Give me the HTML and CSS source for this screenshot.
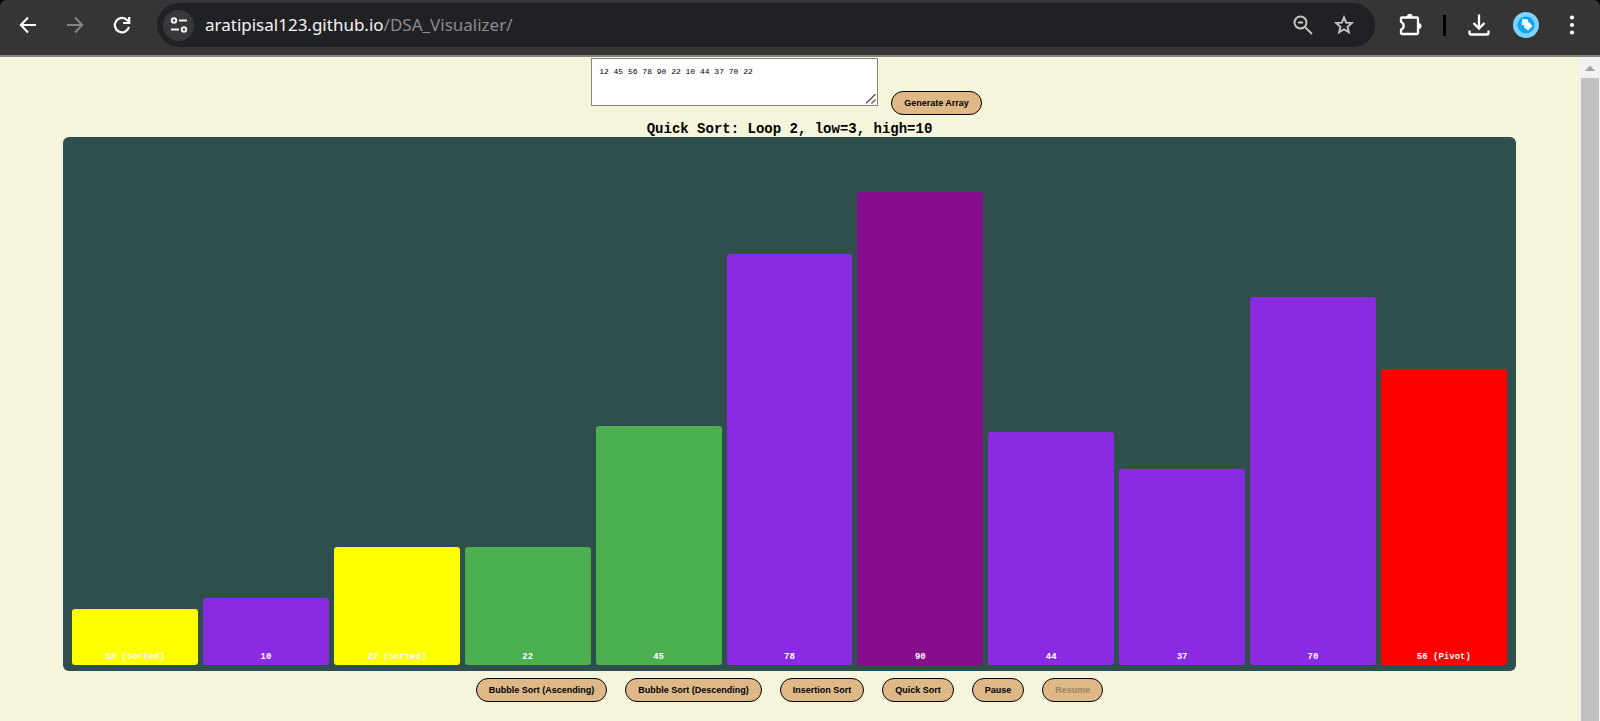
FILE: index.html
```html
<!DOCTYPE html>
<html lang="en">
<head>
<meta charset="utf-8">
<title>DSA Visualizer</title>
<link rel="stylesheet" href="styles.css">
</head>
<body>
<header class="toolbar">
  <nav class="nav">
    <button class="icon-btn" aria-label="Back"><svg width="24" height="24" viewBox="0 0 24 24" fill="none" stroke="#fff" stroke-width="2"><path d="M20 12H5M12 4.5L4.800 12L12 19.500"/></svg></button>
    <button class="icon-btn" aria-label="Forward"><svg width="24" height="24" viewBox="0 0 24 24" fill="none" stroke="#858585" stroke-width="2"><path d="M4 12H19M12 4.500L19.200 12L12 19.500"/></svg></button>
    <button class="icon-btn" aria-label="Reload"><svg width="24" height="24" viewBox="0 0 24 24" fill="none" stroke="#fff" stroke-width="2.200"><path d="M19 14A7.200 7.200 0 1 1 17.300 7.200L19 9"/><path d="M19.200 4V10H13"/></svg></button>
  </nav>
  <div class="omnibox">
    <button class="site-info" aria-label="Site information"><svg width="18" height="18" viewBox="0 0 18 18" fill="none" stroke="#f0f0f0" stroke-width="2"><circle cx="4" cy="4.500" r="2.200"/><path d="M9 4.500H17M1 13.500H9"/><circle cx="14" cy="13.500" r="2.200"/></svg></button>
    <a class="url" href="#">aratipisal123.github.io<span class="url-path">/DSA_Visualizer/</span></a>
    <button class="icon-btn" aria-label="Zoom"><svg width="24" height="24" viewBox="0 0 24 24" fill="none" stroke="#c7c7c7" stroke-width="1.900"><circle cx="9.500" cy="9.500" r="6"/><path d="M13.800 13.800L21 21M7 9.500H12"/></svg></button>
    <button class="icon-btn" aria-label="Bookmark"><svg width="24" height="24" viewBox="0 0 24 24" fill="none" stroke="#c7c7c7" stroke-width="1.900"><path d="M12 4.500L14.200 9.600L19.800 10.100L15.600 13.800L16.800 19.200L12 16.300L7.200 19.200L8.400 13.800L4.200 10.100L9.800 9.600Z"/></svg></button>
  </div>
  <div class="actions">
    <button class="icon-btn" aria-label="Extensions"><svg width="26" height="26" viewBox="0 0 26 26"><path d="M5 5.500H20Q21 5.500 21 6.500V21Q21 22 20 22H5Q4 22 4 21V17.500C7.500 16.500 7.500 11 4 10V6.500Q4 5.500 5 5.500Z" fill="none" stroke="#fff" stroke-width="2.300" stroke-linejoin="round"/><path d="M10 5A2.800 3.200 0 0 1 15.600 5ZM21.500 11A3 2.900 0 0 1 21.500 16.800Z" fill="#fff"/></svg></button>
    <span class="divider"></span>
    <button class="icon-btn" aria-label="Downloads"><svg width="26" height="26" viewBox="0 0 26 26" fill="none" stroke="#fff" stroke-width="2.300"><path d="M13 2.500V16M7.500 11L13 16.500L18.500 11M3.500 18.500V21Q3.500 22.500 5 22.500H21Q22.500 22.500 22.500 21V18.500"/></svg></button>
    <button class="icon-btn" aria-label="Profile"><svg width="26" height="26" viewBox="0 0 26 26"><circle cx="13" cy="13" r="13" fill="#7fd3fb"/><circle cx="13" cy="13" r="8.500" fill="#0aa5f5"/><path d="M9.500 7L15 7.500V10.500L16 10L19.500 14L15 18.500L11 15.500L11.500 13.500L8.500 12.500Z" fill="#fff"/></svg></button>
    <button class="icon-btn" aria-label="Menu"><svg width="24" height="24" viewBox="0 0 24 24" fill="#fff"><circle cx="12" cy="4.500" r="2.100"/><circle cx="12" cy="12" r="2.100"/><circle cx="12" cy="19.500" r="2.100"/></svg></button>
  </div>
</header>
<div class="viewport">
  <main class="page">
    <form class="input-row">
      <div class="array-field">
        <textarea class="array-input" aria-label="Array values">12 45 56 78 90 22 10 44 37 70 22</textarea>
        <svg class="grip" width="10" height="10" viewBox="0 0 10 10" stroke="#555" stroke-width="1.300"><path d="M0 9.500L9.500 0M5.500 9.500L9.500 5.500"/></svg>
      </div>
      <button class="btn" type="button">Generate Array</button>
    </form>
    <h1 class="status">Quick Sort: Loop 2, low=3, high=10</h1>
    <section class="chart" aria-label="Array bars">
      <div class="bar sorted" style="height:56px">10 (Sorted)</div>
      <div class="bar" style="height:67px">10</div>
      <div class="bar sorted" style="height:118px">22 (Sorted)</div>
      <div class="bar lower" style="height:118px">22</div>
      <div class="bar lower" style="height:239px">45</div>
      <div class="bar" style="height:411px">78</div>
      <div class="bar current" style="height:473px">90</div>
      <div class="bar" style="height:233px">44</div>
      <div class="bar" style="height:196px">37</div>
      <div class="bar" style="height:368px">70</div>
      <div class="bar pivot" style="height:296px">56 (Pivot)</div>
    </section>
    <div class="controls">
      <button class="btn">Bubble Sort (Ascending)</button>
      <button class="btn">Bubble Sort (Descending)</button>
      <button class="btn">Insertion Sort</button>
      <button class="btn">Quick Sort</button>
      <button class="btn">Pause</button>
      <button class="btn" disabled>Resume</button>
    </div>
  </main>
  <div class="scrollbar">
    <svg class="scroll-up" width="18" height="21" viewBox="0 0 18 21"><path d="M4 14L9 8.500L14 14Z" fill="#a3a3a3"/></svg>
    <div class="thumb"></div>
  </div>
</div>
</body>
</html>
```
FILE: styles.css
```css
* { box-sizing: border-box; }

html { background: #000; }

body {
  margin: 0;
  min-height: 100vh;
  display: flex;
  flex-direction: column;
  font-family: "Liberation Sans", Arial, sans-serif;
}

button { font-family: inherit; }

.toolbar {
  display: flex;
  align-items: center;
  padding: 3px 16px 8px;
  background: #353535;
  border-bottom: 2px solid #85837a;
  border-radius: 6px 6px 0 0;
}

.nav { display: flex; gap: 23px; width: 141px; }

.icon-btn {
  display: flex;
  padding: 0;
  border: 0;
  background: none;
}

.omnibox {
  flex: 1;
  display: flex;
  align-items: center;
  gap: 17px;
  height: 44px;
  padding: 0 19px 0 6px;
  border-radius: 22px;
  background: #202124;
}

.site-info {
  display: flex;
  align-items: center;
  justify-content: center;
  width: 31px;
  height: 31px;
  padding: 0;
  border: 0;
  border-radius: 50%;
  background: #37383a;
}

.url {
  flex: 1;
  margin-left: -6px;
  font: 17px/24px "Noto Sans", "Open Sans", sans-serif;
  color: #f5f5f5;
  text-decoration: none;
}

.url-path { color: #8b8b8b; }

.actions {
  display: flex;
  align-items: center;
  gap: 20px;
  margin-left: 22px;
}

.divider { width: 3px; height: 21px; background: #000; }
.actions .icon-btn:nth-child(4) { margin: 0 1px; }

.viewport { flex: 1; display: flex; background: #f5f5dc; }

.page {
  flex: 1;
  padding-top: 1px;
  font-family: "Liberation Mono", "Courier New", monospace;
}

.input-row {
  display: flex;
  justify-content: center;
  align-items: flex-end;
  gap: 13px;
  padding-right: 6px;
}

.array-field { position: relative; margin-bottom: 9px; }

.array-input {
  display: block;
  width: 287px;
  height: 48px;
  padding: 7px;
  border: 1px solid #858585;
  background: #fff;
  color: #000;
  font: 8px/12px "Liberation Mono", monospace;
  resize: none;
}

.grip { position: absolute; right: 2px; bottom: 2px; }

.btn {
  height: 24px;
  padding: 0 12px;
  border: 1px solid #000;
  border-radius: 12px;
  background: #deb887;
  color: #000;
  font: bold 9px/12px "Liberation Sans", Arial, sans-serif;
}

.btn:disabled { color: #a08560; }

.status {
  margin: 4px 0 0;
  height: 18px;
  text-align: center;
  font-size: 14px;
  line-height: 20px;
  color: #000;
  position: relative;
}

.chart {
  display: flex;
  align-items: flex-end;
  gap: 5px;
  width: 92%;
  margin: 0 auto;
  padding: 55px 9px 6px;
  border-radius: 6px;
  background: #2f4f4f;
}

.bar {
  flex: 1;
  display: flex;
  align-items: flex-end;
  justify-content: center;
  padding-bottom: 2px;
  border-radius: 3px;
  background: #8a2be2;
  color: #fff;
  font-size: 9px;
  font-weight: bold;
  line-height: 12px;
}

.sorted { background: #ff0; }
.lower { background: #4caf50; }
.current { background: #860d8b; }
.pivot { background: #f00; }

.controls {
  display: flex;
  justify-content: center;
  gap: 18px;
  padding: 7px 0 19px;
}

.scrollbar {
  display: flex;
  flex-direction: column;
  width: 21px;
  padding: 0 1px 0 2px;
  background: #f1f1f1;
}

.thumb { flex: 1; background: #c1c1c1; }
```
